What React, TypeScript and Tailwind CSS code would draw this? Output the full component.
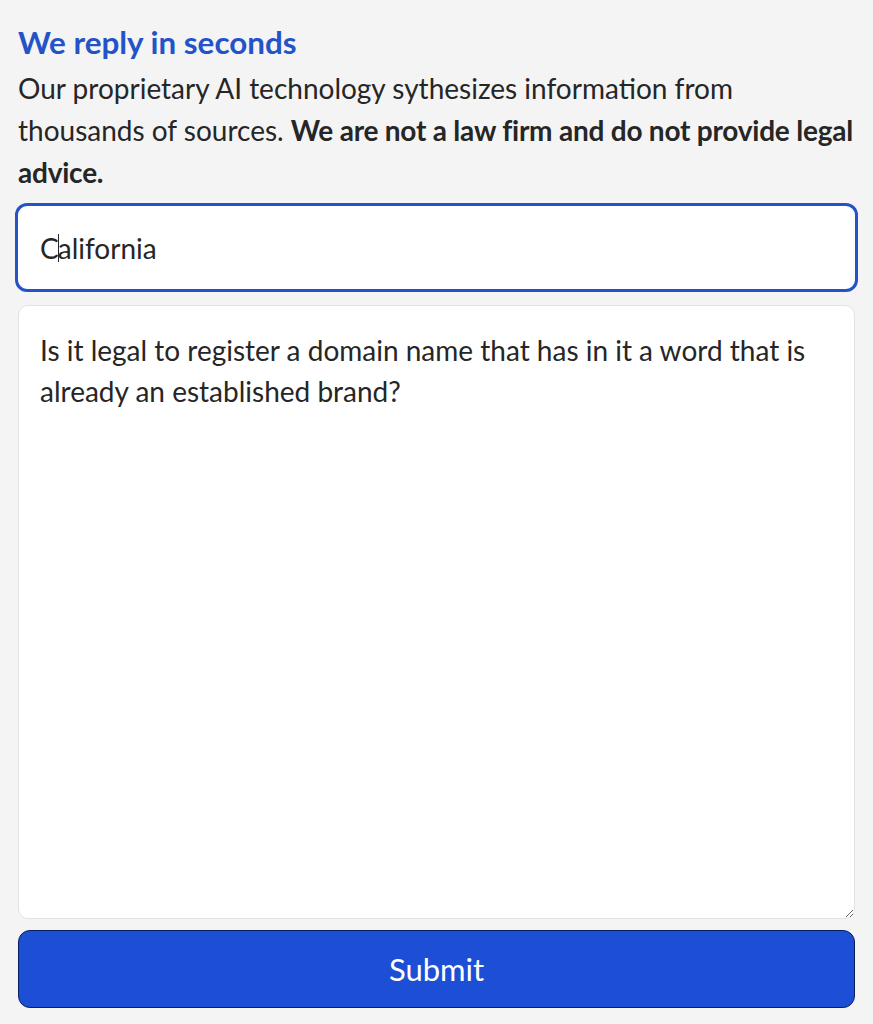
export default function App() {
  return (
    <div className="min-h-screen bg-[#f4f4f4] font-['Lato','Noto_Sans',sans-serif] text-[#262626]">
      <div className="px-[18px] pt-[23px] pb-4">
        <h2 className="text-[31.4px] font-bold leading-[38px] text-[#2453c8]">We reply in seconds</h2>
        <p className="-mr-[10px] mt-[6px] text-[28px] leading-[42px]">
          Our proprietary AI technology sythesizes information from thousands of sources.{" "}
          <strong className="font-bold tracking-[-0.22px]">We are not a law firm and do not provide legal advice.</strong>
        </p>

        {/* state field, shown focused */}
        <div className="-mx-[3px] mt-[10px] flex h-[89px] items-center rounded-[12px] border-[3px] border-[#2453c8] bg-white px-[22px] text-[28px]">
          <span>C</span>
          <span className="mx-[-1px] inline-block h-[28px] w-px bg-[#262626]" />
          <span>alifornia</span>
        </div>

        <textarea
          className="mt-[13px] block h-[614px] w-full resize-y rounded-[10px] border border-[#e2e2e2] bg-white px-[21px] pt-[24px] text-[28px] leading-[41px] text-[#262626] outline-none"
          defaultValue="Is it legal to register a domain name that has in it a word that is already an established brand?"
        />

        <button className="mt-[11px] flex h-[78px] w-full items-center justify-center rounded-[12px] border border-[#0b1f5c] bg-[#1d4fd6] text-[31px] text-white">
          Submit
        </button>
      </div>
    </div>
  );
}
